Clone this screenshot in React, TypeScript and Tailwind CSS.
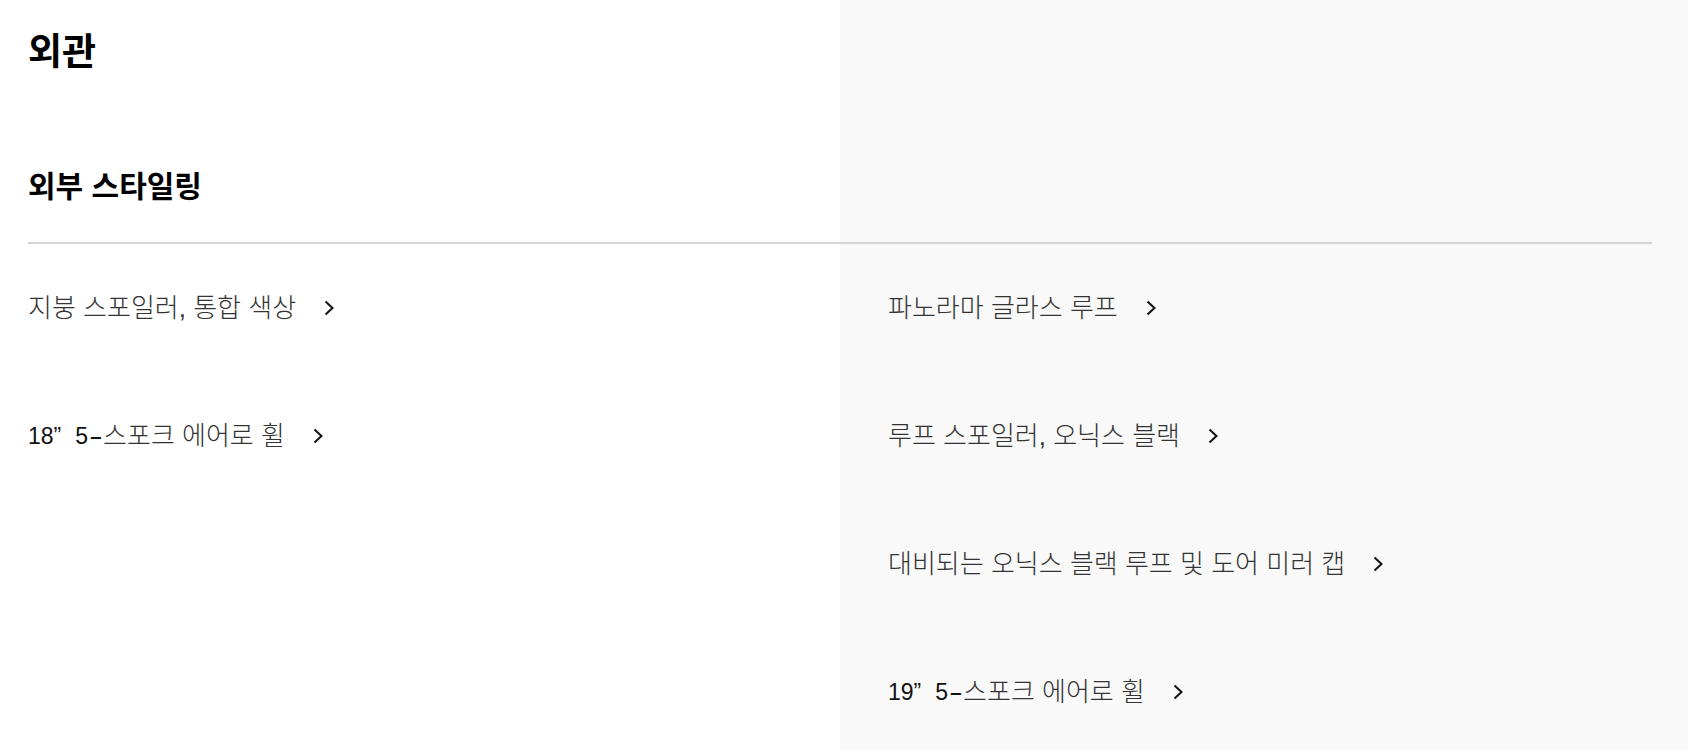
import React from 'react';

type Entry = { pre?: [string, string]; text: string };

const leftItems: Entry[] = [
  { text: '지붕 스포일러, 통합 색상' },
  { pre: ['18”', '5'], text: '스포크 에어로 휠' },
];
const rightItems: Entry[] = [
  { text: '파노라마 글라스 루프' },
  { text: '루프 스포일러, 오닉스 블랙' },
  { text: '대비되는 오닉스 블랙 루프 및 도어 미러 캡' },
  { pre: ['19”', '5'], text: '스포크 에어로 휠' },
];

const Chevron: React.FC = () => (
  <svg width="10" height="16" viewBox="0 0 10 16" className="ml-[28px] shrink-0" fill="none">
    <polyline points="1.5,1.5 8.5,8 1.5,14.5" stroke="#111" strokeWidth="2" />
  </svg>
);

const Item: React.FC<{ entry: Entry }> = ({ entry }) => (
  <div className="h-[128px] flex items-center">
    <a href="#" className="flex items-center text-[26px] leading-[32px] text-[#333]">
      {entry.pre && (
        <span className="text-[23px] text-[#111] whitespace-nowrap">
          {entry.pre[0]}
          <span className="ml-[14px]">{entry.pre[1]}</span>
          <span className="inline-block w-[14px] ml-[1px]">
            <span className="inline-block scale-x-[1.8] origin-left">-</span>
          </span>
        </span>
      )}
      <span
        className="font-light"
        style={{ fontFamily: '"Liberation Sans", "Noto Sans CJK KR Light", "Noto Sans CJK KR", sans-serif' }}
      >
        {entry.text}
      </span>
      <Chevron />
    </a>
  </div>
);

const App: React.FC = () => {
  return (
    <div
      className="min-h-screen bg-[linear-gradient(to_right,#ffffff_840px,#f9f9f9_840px)] pl-[28px] pr-[36px]"
      style={{ fontFamily: '"Liberation Sans", "Noto Sans CJK KR", sans-serif' }}
    >
      {/* Header */}
      <div className="border-b-2 border-[#d4d4d4] pt-[33px] pb-[37px]">
        <h1 className="text-[37px] leading-[40px] font-bold text-black">외관</h1>
        <h2 className="mt-[96px] text-[30px] leading-[36px] font-bold text-black">외부 스타일링</h2>
      </div>

      {/* Items */}
      <div className="grid grid-cols-[860px_1fr]">
        <div className="flex flex-col">
          {leftItems.map((e) => (
            <Item key={e.text + (e.pre ? e.pre[0] : '')} entry={e} />
          ))}
        </div>
        <div className="flex flex-col">
          {rightItems.map((e) => (
            <Item key={e.text + (e.pre ? e.pre[0] : '')} entry={e} />
          ))}
        </div>
      </div>
    </div>
  );
};

export default App;
